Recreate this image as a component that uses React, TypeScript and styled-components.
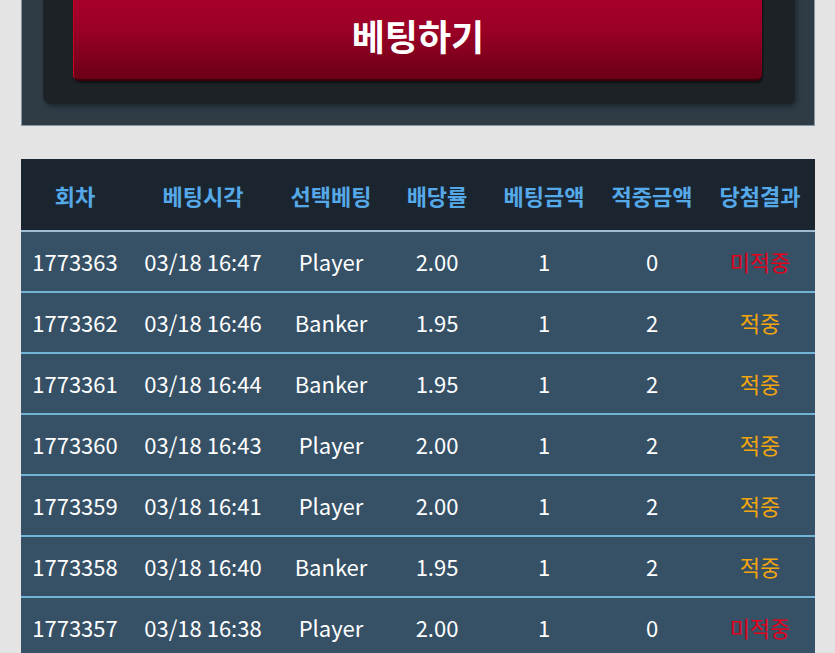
import React from "react";
import styled, { createGlobalStyle } from "styled-components";

const Global = createGlobalStyle`
  html, body { margin: 0; padding: 0; background: #e4e4e4; }
  body { font-family: "Noto Sans CJK KR", "Noto Sans", sans-serif; overflow: hidden; }
`;

const Page = styled.div`
  width: 835px;
  padding: 0 20px 0 21px;
  box-sizing: border-box;
  margin-top: -49px;
`;

const BetPanel = styled.div`
  background: #2f3c46;
  border: 1px solid #8797a5;
  border-top: none;
  padding: 20px 19px 21px 21px;
`;

const InnerBox = styled.div`
  background: #1c2226;
  border-radius: 8px;
  padding: 20px 33px 23px 30px;
  box-shadow: 2px 3px 5px rgba(0, 0, 0, 0.35);
`;

const BetButton = styled.button`
  display: flex;
  width: 100%;
  height: 90px;
  align-items: center;
  justify-content: center;
  padding: 0;
  border: none;
  border-left: 1px solid #c4001c;
  border-bottom: 2px solid #3e000c;
  border-radius: 6px;
  background: linear-gradient(to bottom, #ab002b 0%, #9a0026 45%, #6c0016 100%);
  color: #ffffff;
  font-family: "Noto Sans CJK KR", sans-serif;
  font-size: 36px;
  font-weight: 700;
  box-shadow: 1px 2px 2px rgba(0, 0, 0, 0.5);
`;

const Table = styled.div`
  margin-top: 33px;
  display: grid;
  grid-template-columns: 108px 148px 108px 104px 110px 106px 110px;
`;

const HeadCell = styled.div`
  height: 71px;
  background: #1a2530;
  border-bottom: 2px solid #9fbdd2;
  display: flex;
  align-items: center;
  justify-content: center;
  color: #56a9e8;
  font-size: 22px;
  font-weight: 700;
  white-space: nowrap;
`;

const Cell = styled.div<{ $tone?: "lose" | "win" }>`
  height: 61px;
  padding-bottom: 2px;
  box-sizing: border-box;
  background: #365166;
  border-bottom: 2px solid #72b3d6;
  display: flex;
  align-items: center;
  justify-content: center;
  font-size: 22px;
  font-weight: 400;
  white-space: nowrap;
  color: ${(p) => (p.$tone === "lose" ? "#e0001a" : p.$tone === "win" ? "#f2a50c" : "#ffffff")};
`;

const heads = ["회차", "베팅시각", "선택베팅", "배당률", "베팅금액", "적중금액", "당첨결과"];

const rows: [string, string, string, string, string, string, string][] = [
  ["1773363", "03/18 16:47", "Player", "2.00", "1", "0", "미적중"],
  ["1773362", "03/18 16:46", "Banker", "1.95", "1", "2", "적중"],
  ["1773361", "03/18 16:44", "Banker", "1.95", "1", "2", "적중"],
  ["1773360", "03/18 16:43", "Player", "2.00", "1", "2", "적중"],
  ["1773359", "03/18 16:41", "Player", "2.00", "1", "2", "적중"],
  ["1773358", "03/18 16:40", "Banker", "1.95", "1", "2", "적중"],
  ["1773357", "03/18 16:38", "Player", "2.00", "1", "0", "미적중"],
];

export default function App() {
  return (
    <>
      <Global />
      <Page>
        <BetPanel>
          <InnerBox>
            <BetButton>베팅하기</BetButton>
          </InnerBox>
        </BetPanel>
        <Table>
          {heads.map((h) => (
            <HeadCell key={h}>{h}</HeadCell>
          ))}
          {rows.map((r) =>
            r.map((c, i) => (
              <Cell
                key={r[0] + i}
                $tone={i === 6 ? (c === "미적중" ? "lose" : "win") : undefined}
              >
                {c}
              </Cell>
            ))
          )}
        </Table>
      </Page>
    </>
  );
}
